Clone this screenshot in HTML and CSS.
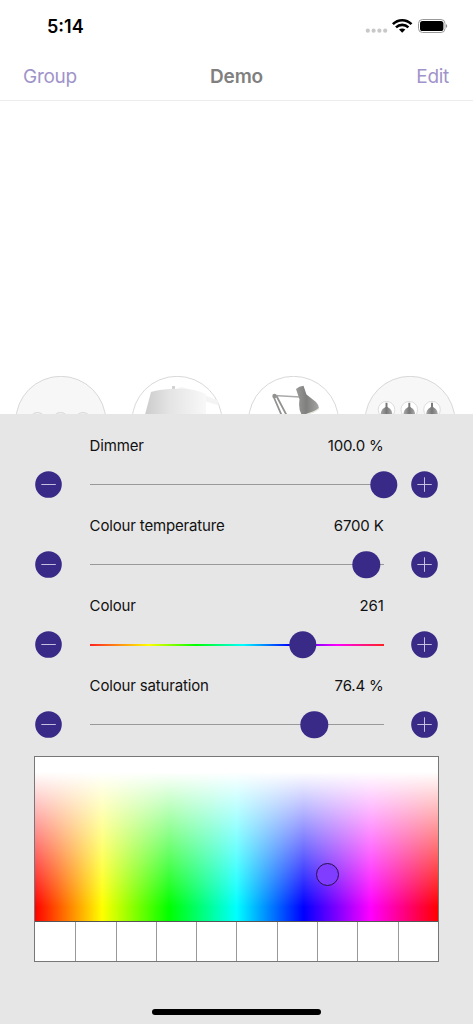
FILE: index.html
```html
<!DOCTYPE html>
<html lang="en">
<head>
<meta charset="utf-8">
<title>Demo</title>
<link rel="stylesheet" href="styles.css">
</head>
<body>
<div class="screen">
  <header class="status">
    <span class="time">5:14</span>
    <svg class="status-icons" width="84" height="20" viewBox="0 0 84 20">
      <g fill="#c8c8c8"><circle cx="3.8" cy="14.7" r="2.1"/><circle cx="9.6" cy="14.7" r="2.1"/><circle cx="15.4" cy="14.7" r="2.1"/><circle cx="21.2" cy="14.7" r="2.1"/></g>
      <g fill="none" stroke="#000" stroke-width="2.6"><path d="M28.9 8.1C34.2 2.9 42.2 2.9 47.5 8.1"/><path d="M32 11.4C35.5 8 40.9 8 44.4 11.4"/></g>
      <path fill="#000" d="M35 13.6C36.8 12.1 39.6 12.1 41.4 13.6L38.2 16.8Z"/>
      <rect x="54.5" y="3.5" width="26.5" height="13" rx="4" fill="none" stroke="#999"/>
      <rect x="56" y="5" width="23.4" height="10" rx="2.6"/>
      <path fill="#888" d="M82 8Q84.4 10 82 12Z"/>
    </svg>
  </header>
  <nav class="nav">
    <span class="action">Group</span>
    <span class="title">Demo</span>
    <span class="action edit">Edit</span>
  </nav>
  <main class="canvas">
    <svg width="473" height="38" viewBox="0 376 473 38">
      <defs>
        <linearGradient id="shade"><stop offset="0" stop-color="#ccc"/><stop offset=".4" stop-color="#e4e4e4"/><stop offset="1" stop-color="#f8f8f8"/></linearGradient>
        <linearGradient id="metal"><stop offset="0" stop-color="#9a9a98"/><stop offset=".45" stop-color="#7f7f7d"/><stop offset="1" stop-color="#a5a5a3"/></linearGradient>
        <linearGradient id="bell"><stop offset="0" stop-color="#aaa"/><stop offset=".5" stop-color="#777"/><stop offset="1" stop-color="#aaa"/></linearGradient>
        <g id="pendant"><circle r="8.3" fill="#fff" stroke="#d4d4d4" stroke-width=".8"/><path fill="url(#bell)" d="M-1-7H1V-3L2-2Q5.8 0 5.8 5H-5.8Q-5.8 0-2-2L-1-3Z"/></g>
      </defs>
      <g stroke="#d4d4d4" stroke-width=".9">
        <circle cx="60.8" cy="421.3" r="45" fill="#f7f7f7"/>
        <circle cx="177" cy="421.3" r="45" fill="#fff"/>
        <circle cx="293.5" cy="421.3" r="45" fill="#fff"/>
        <circle cx="410" cy="421.3" r="45" fill="#f7f7f7"/>
        <g fill="#f1f1f1"><circle cx="37.5" cy="420.5" r="8"/><circle cx="60.5" cy="420.5" r="8"/><circle cx="83" cy="420.5" r="8"/></g>
      </g>
      <path fill="#f4f4f4" d="M178 388Q183 386 188 389L217 400L219 405.5L204 401V414H190Z"/>
      <path fill="#d2d2d2" d="M172 386h3v5h-3z"/>
      <path fill="url(#shade)" d="M151 392Q159 389.2 178 388.8Q193 388 206 394V414H145.2Z"/>
      <g fill="none"><path stroke="#aaa" stroke-width="1.6" d="M274 395.5L300 397"/><path stroke="#929290" stroke-width="1.8" d="M273.5 396.5L281.5 415M276.5 396L286.5 415"/></g>
      <circle cx="274.5" cy="396" r="2.2" fill="#929290"/>
      <path fill="url(#metal)" d="M296 389Q299 386 303.5 385.8L306.5 394.5L316 402Q319 405 319 408.5Q313 414 302 415Q298 410 299.5 399.5Z"/>
      <path fill="none" stroke="#e8e6dc" stroke-width="1.2" d="M306 414.5Q315 412 319 408.5"/>
      <use href="#pendant" x="386.5" y="409.7"/><use href="#pendant" x="409.3" y="409.7"/><use href="#pendant" x="432" y="409.7"/>
    </svg>
  </main>
  <section class="panel">
    <div class="control">
      <div class="label"><span>Dimmer</span><span>100.0 %</span></div>
      <svg class="button" viewBox="0 0 27 27"><circle cx="13.5" cy="13.5" r="13.3"/><path d="M6.3 13.5H20.8"/></svg>
      <div class="track"><i class="thumb" style="left:100%"></i></div>
      <svg class="button" viewBox="0 0 27 27"><circle cx="13.5" cy="13.5" r="13.3"/><path d="M6.3 13.5H20.8M13.5 6.3V20.8"/></svg>
    </div>
    <div class="control">
      <div class="label"><span>Colour temperature</span><span>6700 K</span></div>
      <svg class="button" viewBox="0 0 27 27"><circle cx="13.5" cy="13.5" r="13.3"/><path d="M6.3 13.5H20.8"/></svg>
      <div class="track"><i class="thumb" style="left:94.1%"></i></div>
      <svg class="button" viewBox="0 0 27 27"><circle cx="13.5" cy="13.5" r="13.3"/><path d="M6.3 13.5H20.8M13.5 6.3V20.8"/></svg>
    </div>
    <div class="control">
      <div class="label"><span>Colour</span><span>261</span></div>
      <svg class="button" viewBox="0 0 27 27"><circle cx="13.5" cy="13.5" r="13.3"/><path d="M6.3 13.5H20.8"/></svg>
      <div class="track hue"><i class="thumb" style="left:72.5%"></i></div>
      <svg class="button" viewBox="0 0 27 27"><circle cx="13.5" cy="13.5" r="13.3"/><path d="M6.3 13.5H20.8M13.5 6.3V20.8"/></svg>
    </div>
    <div class="control">
      <div class="label"><span>Colour saturation</span><span>76.4 %</span></div>
      <svg class="button" viewBox="0 0 27 27"><circle cx="13.5" cy="13.5" r="13.3"/><path d="M6.3 13.5H20.8"/></svg>
      <div class="track"><i class="thumb" style="left:76.4%"></i></div>
      <svg class="button" viewBox="0 0 27 27"><circle cx="13.5" cy="13.5" r="13.3"/><path d="M6.3 13.5H20.8M13.5 6.3V20.8"/></svg>
    </div>
    <div class="picker">
      <div class="spectrum"><i class="marker"></i></div>
      <div class="swatches"><i></i><i></i><i></i><i></i><i></i><i></i><i></i><i></i><i></i><i></i></div>
    </div>
    <div class="home"></div>
  </section>
</div>
</body>
</html>
```
FILE: styles.css
```css
* { box-sizing: border-box; }
body { margin: 0; background: #fff; font-family: Inter, "Liberation Sans", sans-serif; }
.screen { width: 473px; height: 1024px; display: flex; flex-direction: column; overflow: hidden; }
.status { height: 52px; display: flex; justify-content: space-between; padding: 16px 25px 0 47px; }
.time { font-size: 18px; line-height: 22px; font-weight: 600; letter-spacing: 0; }
.status-icons { display: block; }
.nav { height: 49px; display: grid; grid-template-columns: 1fr auto 1fr; align-items: center; padding: 1px 23px 0; border-bottom: 1px solid #ededed; font-size: 19px; line-height: 24px; }
.action { color: #9f94ca; letter-spacing: -.3px; }
.edit { text-align: right; padding-right: 1px; }
.title { color: #808080; font-weight: 600; letter-spacing: -.2px; }
.canvas { height: 313px; display: flex; align-items: flex-end; }
.canvas svg { display: block; }
.panel { flex: 1; background: #e6e6e6; padding: 22px 34px 0; display: flex; flex-direction: column; }
.control { height: 80px; display: grid; grid-template-columns: 27px 294px 27px; grid-template-rows: 20px 27px; column-gap: 27.8px; row-gap: 15px; align-items: center; padding-left: .8px; }
.label { grid-column: 2; display: flex; justify-content: space-between; font-size: 15px; line-height: 20px; color: #111; letter-spacing: -.16px; }
.button { grid-row: 2; grid-column: 1; width: 27px; height: 27px; display: block; }
.track + .button { grid-column: 3; }
.button circle { fill: #382a86; }
.button path { stroke: #c3bfdc; stroke-width: 1; fill: none; }
.track { grid-row: 2; grid-column: 2; position: relative; height: 1px; background: #999; }
.hue { height: 2px; background: linear-gradient(90deg, #f22, #ff0 20%, #0f0 36%, #0ff 52%, #00f 68%, #f0f 84%, #f22); }
.thumb { position: absolute; top: 50%; width: 27.4px; height: 27.4px; border-radius: 50%; background: #382a86; transform: translate(-50%, -50%); }
.picker { width: 405px; height: 206px; border: 1px solid #777; }
.spectrum { position: relative; height: 165px; border-bottom: 1px solid #555; background: linear-gradient(#fff 15px, rgba(255,255,255,0) 150px), linear-gradient(90deg, red, #ff0, #0f0, #0ff, #00f, #f0f, red); }
.marker { position: absolute; left: 281px; top: 106px; width: 23px; height: 23px; border: 1px solid #271347; border-radius: 50%; background: #803cff; }
.swatches { height: 39px; display: grid; grid-template-columns: repeat(10, 1fr); background: #fff; }
.swatches i + i { border-left: 1px solid #999; }
.home { width: 169px; height: 6px; margin: 46.5px auto 0 118px; border-radius: 3px; background: #000; }
```
